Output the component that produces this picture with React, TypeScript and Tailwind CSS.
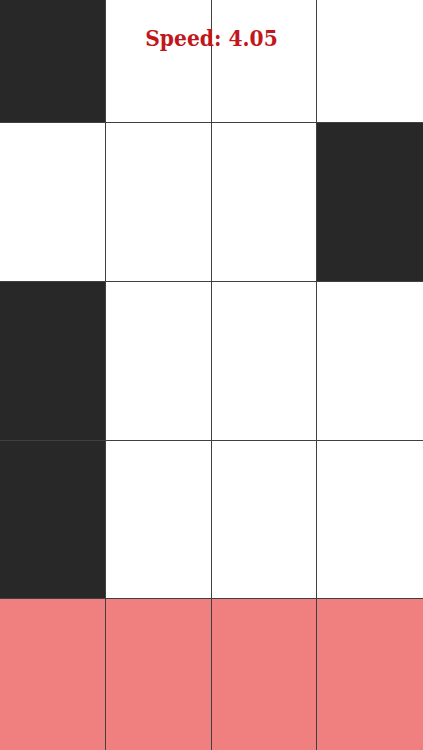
const rows: { h: string; tiles: boolean[]; pink?: boolean }[] = [
  { h: "h-[123px]", tiles: [true, false, false, false] },
  { h: "h-[159px]", tiles: [false, false, false, true] },
  { h: "h-[159px]", tiles: [true, false, false, false] },
  { h: "h-[158px]", tiles: [true, false, false, false] },
  { h: "h-[151px]", tiles: [false, false, false, false], pink: true },
];

export default function App() {
  return (
    <div className="relative w-[423px] h-[750px] overflow-hidden bg-white">
      <div className="flex flex-col">
        {rows.map((row, i) => (
          <div
            key={i}
            className={`grid grid-cols-4 ${row.h} ${i < rows.length - 1 ? "border-b border-[#404040]" : ""}`}
          >
            {row.tiles.map((dark, j) => (
              <div
                key={j}
                className={`${j < 3 ? "border-r border-[#404040]" : ""} ${
                  dark ? "bg-[#282828]" : row.pink ? "bg-[#f08080]" : "bg-white"
                }`}
              />
            ))}
          </div>
        ))}
      </div>
      <div
        className="absolute left-0 right-0 top-[22px] text-center text-[22.5px] font-bold text-[#c2161c]"
        style={{ fontFamily: '"DejaVu Serif Condensed", "DejaVu Serif", serif' }}
      >
        Speed: 4.05
      </div>
    </div>
  );
}
